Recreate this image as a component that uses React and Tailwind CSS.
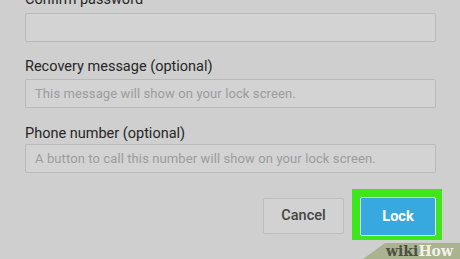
import React from "react";

const Field = ({ label, placeholder, className = "", labelGap = "mb-[5px]" }) => (
  <div className={className}>
    <label className={`block text-[14.5px] leading-[16px] text-[#262626] ${labelGap}`}>{label}</label>
    <div className="h-[29px] border border-[#bababa] rounded-[2px] bg-[#d3d3d3] px-[9px] flex items-center">
      <span className="text-[13px] text-[#9c9c9c] tracking-[0.1px]">{placeholder}</span>
    </div>
  </div>
);

const App = () => {
  return (
    <div
      className="w-[460px] h-[259px] overflow-hidden bg-[#cfcfcf] relative"
      style={{ fontFamily: "Roboto, 'Noto Sans', sans-serif" }}
    >
      <div className="pl-[25px] pr-[24px] -mt-[8px]">
        <Field label="Confirm password" placeholder="" />
        <Field
          className="mt-[17px]"
          labelGap="mb-[4px]"
          label="Recovery message (optional)"
          placeholder="This message will show on your lock screen."
        />
        <Field
          className="mt-[18px]"
          labelGap="mb-[2px]"
          label="Phone number (optional)"
          placeholder="A button to call this number will show on your lock screen."
        />

        {/* Actions */}
        <div className="mt-[24px] flex justify-end items-start gap-[16px]">
          <button className="mt-[1px] w-[81px] h-[36px] border border-[#bdbdbd] rounded-[2px] bg-[#d2d2d2] text-[14.5px] font-medium text-[#454545]">
            Cancel
          </button>
          <div className="relative">
            <span className="absolute -left-[8px] -right-[6px] -top-[8px] -bottom-[4px] bg-[#3ee61a]" />
            <button className="relative w-[76px] h-[39px] border border-[#d8eef5] rounded-[2px] bg-[#38a9df] text-[14.5px] font-bold text-white">
              Lock
            </button>
          </div>
        </div>
      </div>

      {/* watermark */}
      <div className="absolute right-0 bottom-0 w-[97px] h-[16px] bg-[#a9b38f] [clip-path:polygon(22px_0,100%_0,100%_100%,0_100%)] flex items-center justify-end pr-[7px]">
        <span
          className="text-[14px] font-bold leading-none"
          style={{ fontFamily: "'DejaVu Serif', 'Liberation Serif', serif" }}
        >
          <span className="text-[#4d4f42]">wiki</span>
          <span className="text-[#f2f2ea]">How</span>
        </span>
      </div>
    </div>
  );
};

export default App;
